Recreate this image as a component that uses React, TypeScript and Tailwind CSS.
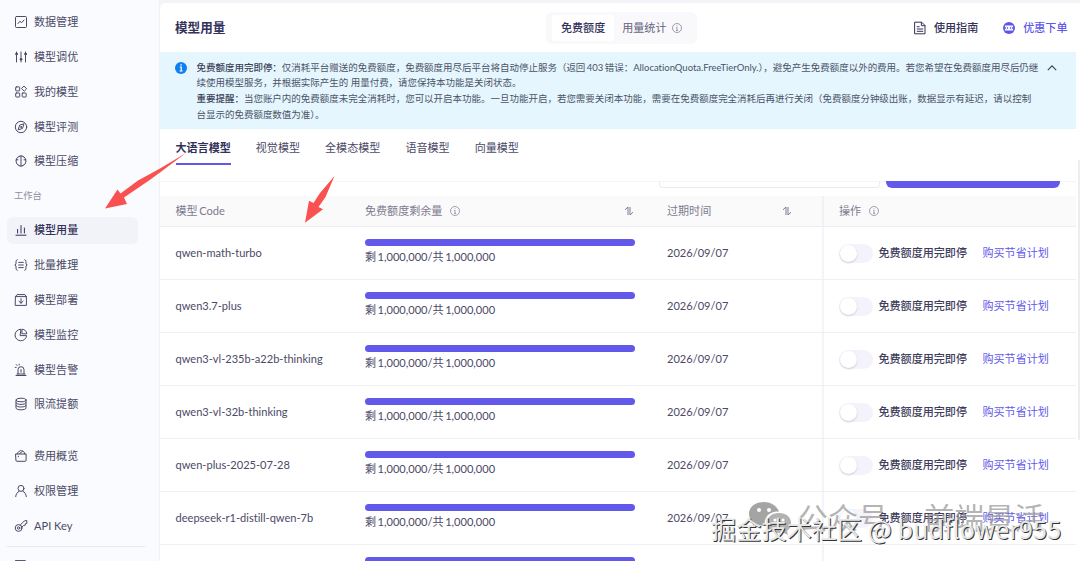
import type { ReactNode } from "react";

const svgProps = {
  width: 14,
  height: 14,
  viewBox: "0 0 14 14",
  fill: "none",
  stroke: "currentColor",
  strokeWidth: 1,
  strokeLinecap: "round",
  strokeLinejoin: "round",
} as const;

interface NavItem {
  label: string;
  icon: ReactNode;
  active?: boolean;
}

const MODEL_NAV: NavItem[] = [
  {
    label: "数据管理",
    icon: (
      <>
        <rect x="1.5" y="1.5" width="11" height="11" rx="1" />
        <path d="M4 8.6 5.9 6.3 7.7 7.7 10 5" />
      </>
    ),
  },
  {
    label: "模型调优",
    icon: (
      <>
        <path d="M2.5 2v10M7 2v10M11.5 2v10" />
        <circle cx="2.5" cy="4" r=".9" fill="currentColor" />
        <circle cx="7" cy="9.3" r=".9" fill="currentColor" />
        <circle cx="11.5" cy="4" r=".9" fill="currentColor" />
      </>
    ),
  },
  {
    label: "我的模型",
    icon: (
      <>
        <rect x="1.7" y="1.9" width="4" height="4" rx=".6" />
        <rect x="1.7" y="8" width="4" height="4" rx=".6" />
        <rect x="8.2" y="8" width="4" height="4" rx=".6" />
        <path d="M10.2 1.3 12.6 3.8 10.2 6.2 7.8 3.8Z" />
      </>
    ),
  },
  {
    label: "模型评测",
    icon: (
      <>
        <circle cx="7" cy="7" r="5.7" />
        <path d="M9.8 4.2 8.5 8.5 4.2 9.8 5.5 5.5Z" />
        <circle cx="7" cy="7" r=".5" />
      </>
    ),
  },
  {
    label: "模型压缩",
    icon: (
      <path d="M5 2.4A5 5 0 0 0 5 11.6M9 2.4A5 5 0 0 1 9 11.6M5 2.4 7 1.8 9 2.4M5 11.6 7 12.2 9 11.6M7 2v10M2.2 5.8H4M10 5.8h1.8" />
    ),
  },
];

const WORK_NAV: NavItem[] = [
  {
    label: "模型用量",
    active: true,
    icon: <path d="M2 12.2h10M3.6 10V6.4M7 10V2.6M10.4 10V5" />,
  },
  {
    label: "批量推理",
    icon: (
      <path d="M3.2 1.6C1.3 1.6 2.3 5.6 1.9 6.2L.8 7l1.1.8c.4.6-.6 4.6 1.3 4.6M10.8 1.6c1.9 0 .9 4 1.3 4.6l1.1.8-1.1.8c-.4.6.6 4.6-1.3 4.6M4.7 4.4h4.6M4.7 7h4.6M4.7 9.6h4.6" />
    ),
  },
  {
    label: "模型部署",
    icon: <path d="M1.6 3.6 3 1.6h8l1.4 2v8.8H1.6ZM1.6 3.6h10.8M7 5.6v4.6M4.9 8.2 7 10.2l2.1-2" />,
  },
  {
    label: "模型监控",
    icon: (
      <>
        <path d="M6.5 1.2A5.8 5.8 0 1 0 12.6 7.6H6.5Z" />
        <path d="M8.3 1.2A5.2 5.2 0 0 1 12.8 5.8H8.3Z" />
      </>
    ),
  },
  {
    label: "模型告警",
    icon: (
      <path d="M4 11V6.7a3 3 0 0 1 6 0V11M2 12.5h10M3 11h8M7 6.6v2.6M2.3 1.6l.8.9M1.2 4.4h1M5.2 1.2v.8" />
    ),
  },
  {
    label: "限流提额",
    icon: (
      <>
        <ellipse cx="7" cy="3" rx="5" ry="1.8" />
        <path d="M2 3v8c0 2.4 10 2.4 10 0V3M2 5.7c0 2.4 10 2.4 10 0M2 8.3c0 2.4 10 2.4 10 0" />
      </>
    ),
  },
];

const ACCOUNT_NAV: NavItem[] = [
  {
    label: "费用概览",
    icon: (
      <path d="M1.9 5h10.2v6.4a.9.9 0 0 1-.9.9H2.8a.9.9 0 0 1-.9-.9ZM3 5C3 3 5 3.6 5.4 2.2 6.4 1 10.6 1.4 10.8 5M5.6 4.6 8.4 2.4M4.3 7.2v.6" />
    ),
  },
  {
    label: "权限管理",
    icon: (
      <>
        <circle cx="7" cy="4.4" r="3" />
        <path d="M1.7 12.6c.2-2.6 1.7-4.5 3.5-5.4M12.3 12.6C12.1 10 10.6 8.1 8.8 7.2" />
      </>
    ),
  },
  {
    label: "API Key",
    icon: (
      <>
        <circle cx="4.6" cy="9" r="3.4" />
        <circle cx="4.6" cy="9" r="1.2" />
        <path d="M6.3 6 10.4 1.9l2.4-.4v2.9l-1.4.3-.2 1.5-1.6.3L7.9 8" />
      </>
    ),
  },
];

const TABS = ["大语言模型", "视觉模型", "全模态模型", "语音模型", "向量模型"];

const MODELS = [
  "qwen-math-turbo",
  "qwen3.7-plus",
  "qwen3-vl-235b-a22b-thinking",
  "qwen3-vl-32b-thinking",
  "qwen-plus-2025-07-28",
  "deepseek-r1-distill-qwen-7b",
];

function NavGroup({ items }: { items: NavItem[] }) {
  return (
    <nav className="flex flex-col gap-[7.8px]">
      {items.map((item) => (
        <a
          key={item.label}
          className={
            item.active
              ? "flex h-[27px] items-center gap-1.5 rounded-md bg-[#f2f3f8] pl-[7px] font-medium text-[#33315a]"
              : "flex h-[27px] items-center gap-1.5 pl-[7px] text-[#4b4966]"
          }
        >
          <svg {...svgProps}>{item.icon}</svg>
          <span>{item.label}</span>
        </a>
      ))}
    </nav>
  );
}

function InfoIcon() {
  return (
    <svg width="10" height="10" viewBox="0 0 10 10" fill="none" stroke="currentColor" strokeWidth=".7">
      <circle cx="5" cy="5" r="4.5" />
      <path d="M5 4.3V7.5M4.2 4.4H5M4 7.4h2M4.6 2.7h.8" />
    </svg>
  );
}

function SortIcon() {
  return (
    <svg width="10" height="10" viewBox="0 0 10 10" fill="none" stroke="currentColor" strokeWidth="1">
      <path d="M1 3.8 4 1v8M6 1v8L9 6.2" />
    </svg>
  );
}

function Sidebar() {
  return (
    <aside className="flex w-40 shrink-0 flex-col border-r border-[#f0f1f5] bg-[#fafbfe] pt-[8.7px] pr-[21px] pl-[7px]">
      <NavGroup items={MODEL_NAV} />
      <p className="mt-[12.5px] mb-[12.5px] h-[17px] shrink-0 pl-[7px] text-[9.3px] leading-[17px] text-[#8f8fa0]">工作台</p>
      <NavGroup items={WORK_NAV} />
      <div className="mt-[25px]">
        <NavGroup items={ACCOUNT_NAV} />
      </div>
      <div className="mt-[7px] -mr-[7px] h-8 shrink-0 border-t border-[#e8e9ef] pt-[13px] pl-[7px] text-[#4b4966]">
        <svg {...svgProps}>
          <rect x="1" y=".6" width="11" height="11" rx="1" />
        </svg>
      </div>
    </aside>
  );
}

function Header() {
  return (
    <header className="grid h-[49px] shrink-0 grid-cols-[371px_1fr_auto] items-center pr-[12.5px] pl-[15px]">
      <h1 className="text-[12.6px] font-bold text-[#33315a]">模型用量</h1>
      <div className="flex">
        <div className="flex h-8 items-center rounded-md bg-[#f9f9fb] pr-[15px] pl-[6px]">
          <span className="flex h-[26px] items-center rounded bg-white px-[9px] font-medium text-[#33315a]">免费额度</span>
          <span className="ml-2 text-[#66647f]">用量统计</span>
          <span className="ml-[5px] text-[#777589]">
            <InfoIcon />
          </span>
        </div>
      </div>
      <div className="flex items-center font-medium">
        <svg {...svgProps} className="text-[#33315a]">
          <path d="M2 1.2h6.7l3.3 3.3v8.3H2ZM8.4 1.4v3.3h3.3M4.2 5.7h2M4.2 8h5.6M4.2 10.3h5.6" />
        </svg>
        <span className="ml-[7px] text-[#33315a]">使用指南</span>
        <svg width="12" height="12" viewBox="0 0 12 12" className="mr-[8px] ml-[25px]">
          <circle cx="6" cy="6" r="6" fill="#5f56e8" />
          <path d="M1.9 3.6h8.2v1.3a1.1 1.1 0 0 0 0 2.2v1.3H1.9V7.1a1.1 1.1 0 0 0 0-2.2Z" fill="#fff" />
          <path d="m3.6 4.8 1.5 1.2-1.5 1.2M8.4 4.8 6.9 6l1.5 1.2" fill="none" stroke="#5f56e8" strokeWidth=".8" />
        </svg>
        <span className="text-[#6259ea]">优惠下单</span>
      </div>
    </header>
  );
}

function Notice() {
  return (
    <section className="mr-1 flex h-[77px] shrink-0 bg-[#e6f6fe] pt-[7.5px] pl-[15px] text-[9.49px] leading-[15.8px] text-[#4b5368]">
      <svg width="12" height="12" viewBox="0 0 12 12" className="mt-[2px] mr-[9.5px] shrink-0">
        <circle cx="6" cy="6" r="6" fill="#0f80f2" />
        <path d="M4.8 5h1.4v4M4.6 9h3M5.4 2.9h1.4" fill="none" stroke="#fff" strokeWidth="1.2" />
      </svg>
      <div className="w-[850px] shrink-0 whitespace-nowrap">
        <p className="[word-spacing:-1px]">
          <span className="font-medium text-[#3b4258]">免费额度用完即停：</span>
          仅消耗平台赠送的免费额度，免费额度用尽后平台将自动停止服务（返回 403 错误：AllocationQuota.FreeTierOnly.），避免产生免费额度以外的费用。若您希望在免费额度用尽后仍继
        </p>
        <p>续使用模型服务，并根据实际产生的 用量付费，请您保持本功能是关闭状态。</p>
        <p>
          <span className="font-medium text-[#3b4258]">重要提醒：</span>
          当您账户内的免费额度未完全消耗时，您可以开启本功能。一旦功能开启，若您需要关闭本功能，需要在免费额度完全消耗后再进行关闭（免费额度分钟级出账，数据显示有延迟，请以控制
        </p>
        <p>台显示的免费额度数值为准）。</p>
      </div>
      <svg width="10" height="10" viewBox="0 0 10 10" className="mt-[3px]" fill="none" stroke="#3b4258" strokeWidth="1.1">
        <path d="M.8 7.2 5 2.8l4.2 4.4" />
      </svg>
    </section>
  );
}

function UsageRow({ code }: { code: string }) {
  return (
    <div className="grid h-[53px] shrink-0 grid-cols-[190px_302px_155px_1fr] border-b border-[#efeff5] pl-[15px] text-[#4b4966]">
      <span className="self-center pl-[0.5px]">{code}</span>
      <div className="pt-[12px]">
        <div className="h-[6.5px] w-[270px] rounded-full bg-[#6259ea]" />
        <p className="mt-[3px] leading-4 [word-spacing:-1.3px]">剩 1,000,000/共 1,000,000</p>
      </div>
      <span className="self-center">2026/09/07</span>
      <div className="flex items-center border-l-2 border-[#f4f4f9] pl-[15px]">
        <span className="flex h-[19px] w-[34px] items-center rounded-full bg-[#f4f3fc] pl-px">
          <span className="h-[17px] w-[17px] rounded-full bg-white shadow-[0_1px_2px_rgba(40,35,80,0.2)]" />
        </span>
        <span className="ml-[5.5px] font-medium text-[#3f3d5c]">免费额度用完即停</span>
        <a className="ml-[15.5px] text-[#6259ea]">购买节省计划</a>
      </div>
    </div>
  );
}

function Watermarks() {
  return (
    <div className="pointer-events-none absolute top-[494px] left-[711px] h-[60px] w-[360px] whitespace-nowrap">
      <div className="absolute top-[-1px] left-[38px] flex items-center text-[30px] leading-[48px] text-[#9b9b9b]/75">
        <svg width="43" height="36" viewBox="0 0 43 36" className="mr-[6px] opacity-90">
          <path d="M15 3C6 3 0 8 0 15c0 4 2 7 5 9l-1 5 6-3c2 .7 4 .8 6 .7-2-8 5-15 14-14C28 7 22 3 15 3Z" fill="#9b9b9b" />
          <path d="M30 14c-7 0-12 4-12 10s5 10 12 10c2 0 3 0 4-.5l5 2.500-1-4c3-2 4-5 4-8 0-6-5-10-12-10Z" fill="#aaa" />
          <g fill="#fff">
            <circle cx="10" cy="11" r="2" />
            <circle cx="20" cy="11" r="2" />
            <circle cx="26" cy="21" r="1.6" />
            <circle cx="34" cy="21" r="1.6" />
          </g>
        </svg>
        <span className="[word-spacing:6.5px]">公众号 · 前端景活</span>
      </div>
      <span className="absolute top-[16px] left-0 font-['Noto_Sans_CJK_SC',sans-serif] text-[25.1px] leading-9 tracking-[0.12px] text-[#e8e8e8] [text-shadow:1px_1px_0_#333]">
        掘金技术社区 @ budflower955
      </span>
    </div>
  );
}

function Arrows() {
  return (
    <svg width="1080" height="561" viewBox="0 0 1080 561" className="pointer-events-none absolute inset-0" fill="#f95151">
      <path d="M105 208.5 117.5 189.5 120.500 193.500 138 180.500 160 168.500 186 153 160 172.500 149 180.500 124 197.500 127 204Z" />
      <path d="M305 222.800 309 200.700 313.500 203 320 193 334.500 176 325.500 197 318.500 207 323 209.300Z" />
    </svg>
  );
}

export default function App() {
  return (
    <div className="relative flex h-[561px] w-[1080px] overflow-hidden bg-[#f3f4f7] font-['Lato','Noto_Sans_CJK_SC',sans-serif] text-[11.07px] leading-4 [font-variant-ligatures:none]">
      <Sidebar />
      <main className="mt-[3px] flex min-w-0 flex-1 flex-col overflow-hidden rounded-tl-md bg-white">
        <Header />
        <Notice />
        <div className="flex h-9 shrink-0 gap-[25px] pl-[15.5px] text-[#4b4966]">
          {TABS.map((tab, i) => (
            <span
              key={tab}
              className={
                i === 0
                  ? "border-b-2 border-[#6259ea] pt-[10.5px] font-bold text-[#33315a]"
                  : "pt-[10.5px]"
              }
            >
              {tab}
            </span>
          ))}
        </div>
        <div className="mt-4 mr-1 flex h-[7px] shrink-0 items-start justify-end border-t border-[#f5f5f8] pr-4">
          <div className="h-1.5 w-[221px] rounded-b border border-t-0 border-[#eaeaf1] bg-white" />
          <div className="-mt-px ml-[6px] h-[7px] w-[174px] rounded-b-md bg-[#6259ea]" />
        </div>
        <div className="mt-2 mr-1 flex flex-col">
          <div className="grid h-[31px] shrink-0 grid-cols-[190px_302px_155px_1fr] border-b border-[#ececf2] bg-[#fafafb] pl-[15px] text-[#7d7b8f]">
            <span className="self-center pl-[0.5px] [word-spacing:-1.3px]">模型 Code</span>
            <div className="flex items-center gap-2">
              免费额度剩余量
              <InfoIcon />
              <span className="ml-auto mr-[33px]">
                <SortIcon />
              </span>
            </div>
            <div className="flex items-center justify-between pr-[30px]">
              过期时间
              <SortIcon />
            </div>
            <div className="flex items-center gap-2 border-l-2 border-[#f0f0f6] pl-[15px]">
              操作
              <InfoIcon />
            </div>
          </div>
          {MODELS.map((code) => (
            <UsageRow key={code} code={code} />
          ))}
          {/* next row, only its quota bar is above the fold */}
          <div className="grid grid-cols-[190px_302px_155px_1fr] pl-[15px]">
            <div className="col-start-2 pt-[12px]">
              <div className="h-[6.5px] w-[270px] rounded-full bg-[#6259ea]" />
            </div>
            <div className="col-start-4 h-5 border-l-2 border-[#f4f4f9]" />
          </div>
        </div>
      </main>
      <div className="absolute top-[160px] right-0 h-[280px] w-[2px] rounded-full bg-[#ededf1]" />
      <Arrows />
      <Watermarks />
    </div>
  );
}
